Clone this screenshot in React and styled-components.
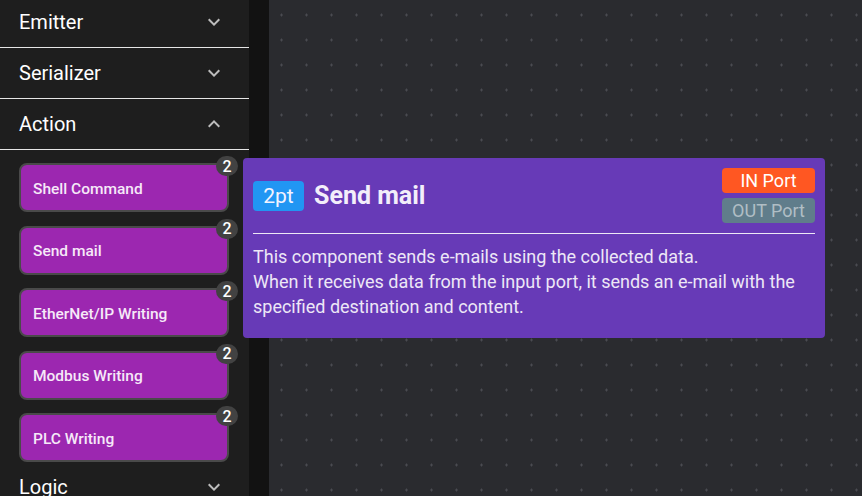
import styled, { createGlobalStyle } from "styled-components";

const GlobalStyle = createGlobalStyle`
  html, body {
    margin: 0;
    padding: 0;
    background: #2a2b2f;
    font-family: Roboto, "Liberation Sans", sans-serif;
    overflow: hidden;
  }
`;

const actions = [
  "Shell Command",
  "Send mail",
  "EtherNet/IP Writing",
  "Modbus Writing",
  "PLC Writing",
];

const Chevron = ({ up }) => (
  <svg width="24" height="24" viewBox="0 0 24 24" fill="#bdbdbd">
    {up ? (
      <path d="M12 8l-6 6 1.41 1.41L12 10.83l4.59 4.58L18 14z" />
    ) : (
      <path d="M16.59 8.59 12 13.17 7.41 8.59 6 10l6 6 6-6z" />
    )}
  </svg>
);

const Section = ({ title, open }) => (
  <Header $open={open}>
    <HeaderTitle>{title}</HeaderTitle>
    <Chevron up={open} />
  </Header>
);

const App = () => {
  return (
    <>
      <GlobalStyle />
      <Page>
        <Sidebar>
          <List>
            <Section title="Emitter" />
            <Section title="Serializer" />
            <Section title="Action" open />
            <Items>
              {actions.map((name) => (
                <Item key={name}>
                  {name}
                  <Count>2</Count>
                </Item>
              ))}
            </Items>
            <Section title="Logic" />
          </List>
        </Sidebar>
        <Gutter />
        <Canvas>
          <Grid width="100%" height="100%">
            <defs>
              <pattern id="dots" x="0" y="2.5" width="25" height="25" patternUnits="userSpaceOnUse">
                <rect x="11" y="12" width="3" height="1" fill="#4a4b51" />
                <rect x="12" y="11" width="1" height="3" fill="#4a4b51" />
              </pattern>
            </defs>
            <rect width="100%" height="100%" fill="url(#dots)" />
          </Grid>
        </Canvas>
        <Tooltip>
          <TipHead>
            <TipTitle>
              <Points>2pt</Points>
              <Name>Send mail</Name>
            </TipTitle>
            <Ports>
              <Port $bg="#ff5722" $fg="#ffffff">IN Port</Port>
              <Port $bg="#607d8b" $fg="#b0bec5">OUT Port</Port>
            </Ports>
          </TipHead>
          <Divider />
          <Desc>
            This component sends e-mails using the collected data.
            <br />
            When it receives data from the input port, it sends an e-mail with the
            specified destination and content.
          </Desc>
        </Tooltip>
      </Page>
    </>
  );
};

export default App;

const Page = styled.div`
  position: relative;
  display: flex;
  width: 862px;
  height: 496px;
  overflow: hidden;
`;

const Sidebar = styled.div`
  width: 249px;
  flex-shrink: 0;
  background: #1e1e1e;
  overflow: hidden;
`;

const List = styled.div`
  margin-top: -3px;
`;

const Header = styled.div`
  height: 50px;
  display: flex;
  align-items: center;
  justify-content: space-between;
  padding: 0 23px 0 19px;
  border-bottom: 1px solid #e6e6e6;
`;

const HeaderTitle = styled.span`
  color: #ffffff;
  font-size: 20px;
`;

const Items = styled.div`
  display: flex;
  flex-direction: column;
  gap: 15.5px;
  padding: 13px 20px 2px 19px;
`;

const Item = styled.div`
  position: relative;
  height: 43px;
  box-sizing: content-box;
  display: flex;
  align-items: center;
  padding: 2px 0 0 12px;
  margin-bottom: -2px;
  background: #9c27b0;
  border: 2px solid #4a4a4a;
  border-radius: 8px;
  color: #f6e9f8;
  font-size: 15.5px;
  font-weight: 500;
`;

const Count = styled.span`
  position: absolute;
  top: -9px;
  right: -11px;
  width: 22px;
  height: 20px;
  border-radius: 11px;
  background: #424242;
  color: #ffffff;
  font-size: 16px;
  font-weight: 500;
  display: flex;
  align-items: center;
  justify-content: center;
`;

const Gutter = styled.div`
  width: 20px;
  flex-shrink: 0;
  background: #121212;
`;

const Canvas = styled.div`
  position: relative;
  flex: 1;
  background: #2a2b2f;
`;

const Grid = styled.svg`
  position: absolute;
  inset: 0;
  display: block;
`;

const Tooltip = styled.div`
  position: absolute;
  left: 243px;
  top: 158px;
  width: 582px;
  height: 180px;
  box-sizing: border-box;
  padding: 10px 10px;
  background: #673ab7;
  border-radius: 4px;
`;

const TipHead = styled.div`
  display: flex;
  justify-content: space-between;
  align-items: center;
`;

const TipTitle = styled.div`
  display: flex;
  align-items: center;
  gap: 10px;
`;

const Points = styled.span`
  background: #2196f3;
  color: #f3f3ff;
  border-radius: 4px;
  font-size: 21px;
  height: 30px;
  width: 51px;
  display: flex;
  align-items: center;
  justify-content: center;
`;

const Name = styled.span`
  color: #f3eefa;
  font-size: 25px;
  font-weight: 700;
`;

const Ports = styled.div`
  display: flex;
  flex-direction: column;
  gap: 5px;
`;

const Port = styled.span`
  width: 93px;
  height: 25px;
  border-radius: 4px;
  background: ${(p) => p.$bg};
  color: ${(p) => p.$fg};
  font-size: 18px;
  display: flex;
  align-items: center;
  justify-content: center;
`;

const Divider = styled.div`
  height: 1px;
  background: #ede7f6;
  margin: 10px 0 10px;
`;

const Desc = styled.p`
  margin: 0;
  color: #ede7f6;
  font-size: 18px;
  line-height: 25px;
`;
